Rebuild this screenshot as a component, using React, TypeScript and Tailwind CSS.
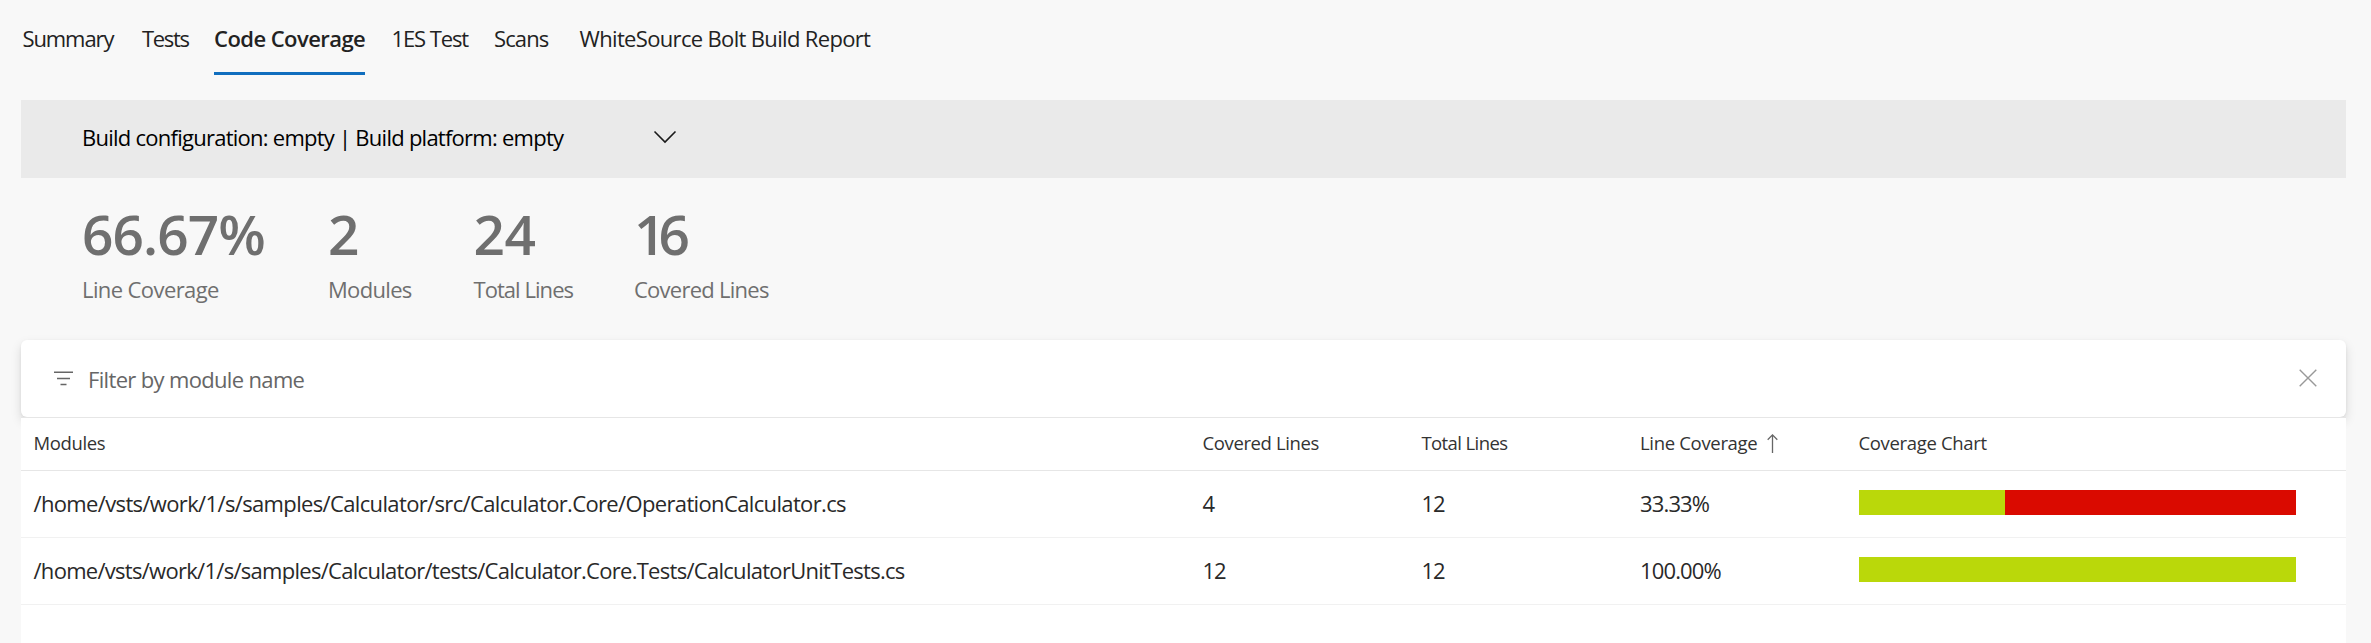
import React from "react";

const tabs = [
  { label: "Summary", style: "tracking-[-1.1px]" },
  { label: "Tests", style: "tracking-[-1.3px]" },
  { label: "Code Coverage", style: "font-semibold tracking-[-0.55px]" },
  { label: "1ES Test", style: "tracking-[-1.1px]" },
  { label: "Scans", style: "tracking-[-0.9px]" },
  { label: "WhiteSource Bolt Build Report", style: "tracking-[-0.66px]" },
];

const stats = [
  { value: "66.67%", valueStyle: "tracking-[-0.9px]", label: "Line Coverage", style: "tracking-[-0.6px]" },
  { value: "2", valueStyle: "tracking-normal", label: "Modules", style: "tracking-[-0.68px]" },
  { value: "24", valueStyle: "tracking-[-0.5px]", label: "Total Lines", style: "tracking-[-0.95px]" },
  { value: "16", valueStyle: "tracking-[-7px]", label: "Covered Lines", style: "tracking-[-0.74px]" },
];

const modules = [
  {
    path: "/home/vsts/work/1/s/samples/Calculator/src/Calculator.Core/OperationCalculator.cs",
    style: "tracking-[-0.644px]",
    covered: 4,
    total: 12,
  },
  {
    path: "/home/vsts/work/1/s/samples/Calculator/tests/Calculator.Core.Tests/CalculatorUnitTests.cs",
    style: "tracking-[-0.713px]",
    covered: 12,
    total: 12,
  },
];

const columns = "grid grid-cols-[1169px_219px_218.5px_218.5px_1fr] items-center pl-[12.5px]";

function Tabs() {
  return (
    <nav className="grid h-[75px] grid-cols-[119.5px_72px_177.5px_102.5px_85.5px_auto] justify-start pl-[22.5px]">
      {tabs.map((tab) => (
        <a key={tab.label} className="flex flex-col items-start">
          <span
            className={
              tab.label === "Code Coverage"
                ? "flex h-full w-[151px] items-center whitespace-nowrap border-b-[3px] border-[#106ebe] pt-[4px]"
                : "flex h-full items-center whitespace-nowrap pt-px"
            }
          >
            <span className={tab.style}>{tab.label}</span>
          </span>
        </a>
      ))}
    </nav>
  );
}

function ConfigurationBar() {
  return (
    <div className="mt-[25px] flex h-[78px] items-center bg-[#eaeaea] pb-[3px] pl-[61px] text-black">
      <span className="w-[571px] whitespace-nowrap tracking-[-0.747px]">
        Build configuration: empty | Build platform: empty
      </span>
      <svg className="-mt-[1px]" width="24" height="14" viewBox="0 0 24 14" fill="none" stroke="#1a1a1a" strokeWidth="1.6">
        <path d="M1.5 1.5 12 12 22.5 1.5" />
      </svg>
    </div>
  );
}

function Stats() {
  return (
    <div className="mt-6 grid h-[138px] grid-cols-[246px_145.5px_160.5px_auto] content-start justify-start pl-[61px] text-[#6f6f6f]">
      {stats.map((stat) => (
        <div key={stat.label} className="whitespace-nowrap">
          <div className={`text-[55px] leading-[64px] font-semibold ${stat.valueStyle}`}>{stat.value}</div>
          <div className={`mt-2 leading-[30px] ${stat.style}`}>{stat.label}</div>
        </div>
      ))}
    </div>
  );
}

function FilterBar() {
  return (
    <div className="flex h-[77px] items-center rounded-md bg-white pt-[2px] pr-[30px] pl-[33px] text-[#666] shadow-[0_5px_11px_rgba(0,0,0,0.13),0_1px_3px_rgba(0,0,0,0.06)]">
      <svg className="-mt-[3px]" width="19" height="15" viewBox="0 0 19 15" fill="none" stroke="#666" strokeWidth="1.5">
        <path d="M0 1.2h19M3 7.4h13M6.5 13.5h6" />
      </svg>
      <span className="ml-[15px] grow tracking-[-0.66px]">Filter by module name</span>
      <svg className="-mt-[3px] -mr-px" width="18" height="18" viewBox="0 0 18 18" fill="none" stroke="#999" strokeWidth="1.4">
        <path d="M.7.7 17.3 17.3M17.3.7.7 17.3" />
      </svg>
    </div>
  );
}

function ModuleTable() {
  return (
    <div className="grow border-t border-[#e6e6e6] bg-white text-[#292929]">
      <div className={`${columns} h-[53px] border-b border-[#e6e6e6] pb-0.5 text-[18.5px] text-[#333]`}>
        <span className="tracking-[-0.365px]">Modules</span>
        <span className="tracking-[-0.379px]">Covered Lines</span>
        <span className="tracking-[-0.6px]">Total Lines</span>
        <span className="flex items-center tracking-[-0.322px]">
          Line Coverage
          <svg className="ml-[10px]" width="11" height="19" viewBox="0 0 11 19" fill="none" stroke="#666" strokeWidth="1.3">
            <path d="M5.5 19V1M.7 5.7 5.5.9l4.8 4.8" />
          </svg>
        </span>
        <span className="tracking-[-0.333px]">Coverage Chart</span>
      </div>
      {modules.map((m) => (
        <div key={m.path} className={`${columns} h-[67px] border-b border-[#f1f1f1] pb-[2px]`}>
          <span className={`whitespace-nowrap ${m.style}`}>{m.path}</span>
          <span className="tracking-[-1px]">{m.covered}</span>
          <span className="tracking-[-1px]">{m.total}</span>
          <span className="tracking-[-0.85px]">{((m.covered / m.total) * 100).toFixed(2)}%</span>
          <div className="mb-px ml-[0.5px] h-[25px] w-[437px] bg-[#da0a00]">
            <div className="h-full bg-[#bad80a]" style={{ width: `${(m.covered / m.total) * 100}%` }} />
          </div>
        </div>
      ))}
    </div>
  );
}

export default function App() {
  return (
    <div className="flex h-[643px] w-[2371px] flex-col overflow-hidden bg-[#f8f8f8] font-['Open_Sans',sans-serif] text-[22px] text-[#222]">
      <Tabs />
      <main className="mr-[25px] ml-[21px] flex grow flex-col">
        <ConfigurationBar />
        <Stats />
        <FilterBar />
        <ModuleTable />
      </main>
    </div>
  );
}
